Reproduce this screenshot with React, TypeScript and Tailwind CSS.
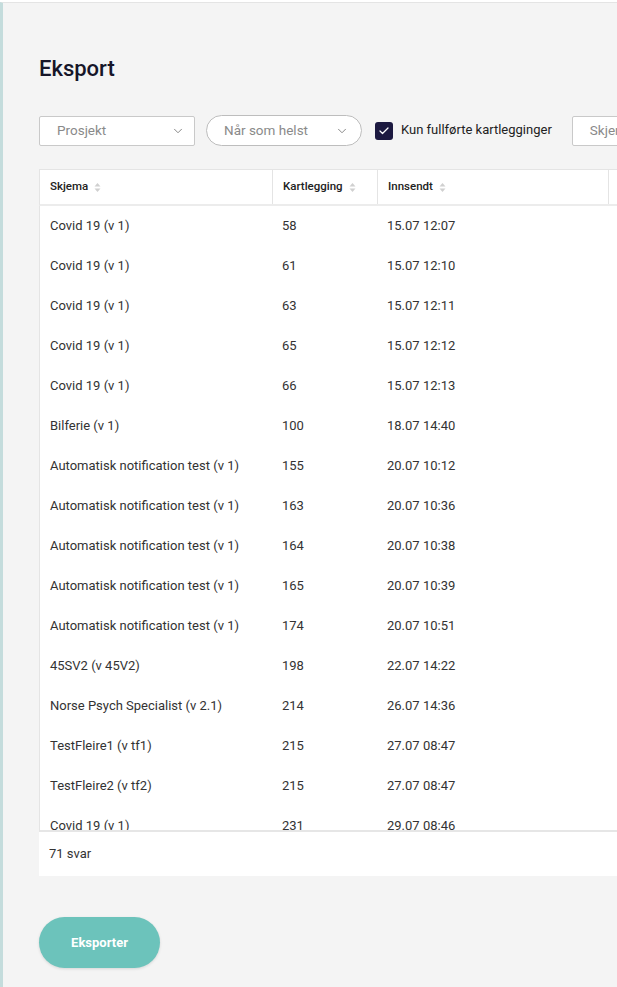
import { ChevronDown, Check } from 'lucide-react'

const rows: [string, string, string][] = [
  ['Covid 19 (v 1)', '58', '15.07 12:07'],
  ['Covid 19 (v 1)', '61', '15.07 12:10'],
  ['Covid 19 (v 1)', '63', '15.07 12:11'],
  ['Covid 19 (v 1)', '65', '15.07 12:12'],
  ['Covid 19 (v 1)', '66', '15.07 12:13'],
  ['Bilferie (v 1)', '100', '18.07 14:40'],
  ['Automatisk notification test (v 1)', '155', '20.07 10:12'],
  ['Automatisk notification test (v 1)', '163', '20.07 10:36'],
  ['Automatisk notification test (v 1)', '164', '20.07 10:38'],
  ['Automatisk notification test (v 1)', '165', '20.07 10:39'],
  ['Automatisk notification test (v 1)', '174', '20.07 10:51'],
  ['45SV2 (v 45V2)', '198', '22.07 14:22'],
  ['Norse Psych Specialist (v 2.1)', '214', '26.07 14:36'],
  ['TestFleire1 (v tf1)', '215', '27.07 08:47'],
  ['TestFleire2 (v tf2)', '215', '27.07 08:47'],
  ['Covid 19 (v 1)', '231', '29.07 08:46'],
]

function SortIcon() {
  return (
    <svg width="7" height="11" viewBox="0 0 7 11" className="ml-[6px] text-[#d0d0d0]">
      <path d="M3.5 1 L6.5 4.5 H0.5 Z" fill="currentColor" />
      <path d="M3.5 10 L6.5 6.5 H0.5 Z" fill="currentColor" />
    </svg>
  )
}

function HeaderCell({ label, width, last }: { label: string; width: string; last?: boolean }) {
  return (
    <div className={`flex items-center px-[10px] h-full shrink-0 ${width} ${last ? '' : 'border-r border-[#e4e4e4]'}`}>
      <span className="text-[11.5px] font-medium text-[#222]">{label}</span>
      <SortIcon />
    </div>
  )
}

export default function App() {
  return (
    <div className="w-[617px] h-[987px] overflow-hidden bg-white pt-[2px] font-['Roboto',sans-serif]">
      <div className="h-full bg-[#f4f4f4] border-l-[3px] border-l-[#c4dcdc] border-t border-t-[#e4e4e4] overflow-hidden">
        <div className="pl-[36px] pt-[51px] w-[1000px]">
          <h1 className="text-[22px] font-medium text-[#161629] leading-[30px]">Eksport</h1>

          <div className="flex items-center mt-[31px] h-[31px]">
            <div className="flex items-center justify-between w-[156px] h-[30px] bg-white border border-[#c9c9c9] rounded-[2px] pl-[17px] pr-[9px]">
              <span className="text-[13.5px] text-[#8a8a8a]">Prosjekt</span>
              <ChevronDown size={14} strokeWidth={1.5} className="text-[#777]" />
            </div>
            <div className="flex items-center justify-between w-[156px] h-[31px] ml-[11px] bg-white border border-[#bdbdbd] rounded-full pl-[17px] pr-[12px]">
              <span className="text-[13.5px] text-[#8a8a8a]">Når som helst</span>
              <ChevronDown size={14} strokeWidth={1.5} className="text-[#777]" />
            </div>
            <div className="flex items-center ml-[13px]">
              <div className="w-[18px] h-[18px] rounded-[3px] bg-[#1c1940] flex items-center justify-center">
                <Check size={12} strokeWidth={2.5} className="text-white" />
              </div>
              <span className="ml-[8px] text-[13px] text-[#222] leading-[18px] -mt-[2px]">Kun fullførte kartlegginger</span>
            </div>
            <div className="flex items-center w-[156px] h-[30px] ml-[20px] bg-white border border-[#c9c9c9] rounded-[2px] pl-[17px]">
              <span className="text-[13.5px] text-[#8a8a8a]">Skjema</span>
            </div>
          </div>

          <div className="mt-[23px] w-[900px]">
            <div className="flex h-[37px] bg-white border border-[#e4e4e4] border-b-2 border-b-[#ececec]">
              <HeaderCell label="Skjema" width="w-[233px]" />
              <HeaderCell label="Kartlegging" width="w-[105px]" />
              <HeaderCell label="Innsendt" width="w-[231px]" />
              <HeaderCell label="Status" width="w-[200px]" last />
            </div>
            <div className="h-[626px] overflow-hidden bg-white border-l border-l-[#e4e4e4] border-b-2 border-b-[#e6e6e6]">
              {rows.map((r, i) => (
                <div key={i} className="flex items-center h-[40px] text-[13px] text-[#333]">
                  <div className="w-[233px] pl-[10px] shrink-0">{r[0]}</div>
                  <div className="w-[105px] pl-[9px] shrink-0">{r[1]}</div>
                  <div className="w-[231px] pl-[9px] shrink-0">{r[2]}</div>
                </div>
              ))}
            </div>
            <div className="h-[44px] bg-white flex items-center pl-[10px] text-[13px] text-[#333]">71 svar</div>
          </div>

          <button className="mt-[41px] w-[121px] h-[51px] rounded-full bg-[#6cc3bb] text-white text-[13px] font-bold shadow-[0_1px_3px_rgba(0,0,0,0.12)]">
            Eksporter
          </button>
        </div>
      </div>
    </div>
  )
}
